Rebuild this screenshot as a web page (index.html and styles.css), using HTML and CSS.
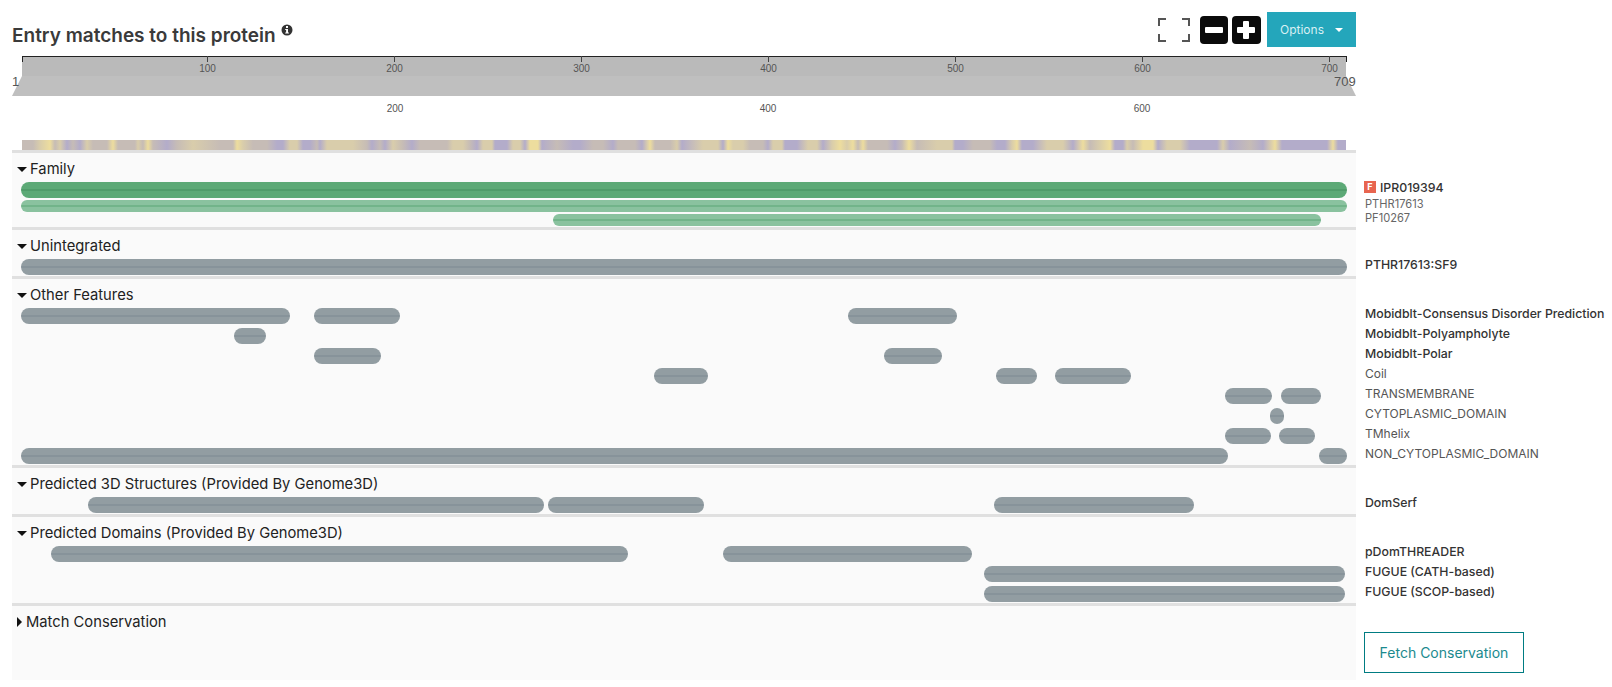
FILE: index.html
```html
<!DOCTYPE html>
<html lang="en">
<head>
    <meta charset="UTF-8">
    <title>Entry matches to this protein</title>
    <link rel="stylesheet" href="styles.css">
</head>
<body>
    <div class="top">
        <h2 class="title">Entry matches to this protein
            <svg class="info" viewBox="0 0 12 12" width="12" height="12">
                <circle cx="6" cy="6" r="5.5" fill="#333"/>
                <rect x="5" y="2" width="2" height="2" fill="#fff"/>
                <path d="M4.2 5h2.8v3.6h.9v1H4.2v-1h.9V6h-.9z" fill="#fff"/>
            </svg>
        </h2>
        <div class="controls">
            <svg class="full" viewBox="0 0 32 24" width="32" height="24">
                <path d="M1 8V1h7M24 1h7v7M31 16v7h-7M8 23H1v-7" fill="none" stroke="#555" stroke-width="2"/>
            </svg>
            <button class="zoom-btn" aria-label="zoom out"><span class="hbar"></span></button>
            <button class="zoom-btn zoom-in" aria-label="zoom in"><span class="hbar"></span><span class="vbar"></span></button>
            <button class="options">Options<span class="opt-caret"></span></button>
        </div>
    </div>

    <svg class="ruler" viewBox="0 0 1344 84" width="1344" height="84">
        <rect class="ruler-band" x="10" y="1" width="1324" height="19"/>
        <polygon class="ruler-zoom" points="10,20 1334,20 1344,40 0,40"/>
        <path class="ruler-line" d="M10 .5H1334.5M10.5 0V6M1334.5 0V6"/>
        <path class="ruler-tick" d="M195.5 0V6M382.5 0V6M569.5 0V6M756.5 0V6M943.5 0V6M1130.5 0V6M1317.5 0V6"/>
        <text class="tick" x="195.5" y="15.5">100</text>
        <text class="tick" x="382.5" y="15.5">200</text>
        <text class="tick" x="569.5" y="15.5">300</text>
        <text class="tick" x="756.5" y="15.5">400</text>
        <text class="tick" x="943.5" y="15.5">500</text>
        <text class="tick" x="1130.5" y="15.5">600</text>
        <text class="tick" x="1317.5" y="15.5">700</text>
        <text class="end" x="0" y="30">1</text>
        <text class="end" x="1322" y="30">709</text>
        <text class="tick" x="383" y="55.5">200</text>
        <text class="tick" x="756" y="55.5">400</text>
        <text class="tick" x="1130" y="55.5">600</text>
    </svg>

    <div class="strip"></div>

    <section class="group">
        <div class="panel">
            <div class="head"><span class="caret"></span>Family</div>
            <div class="rows rows-tight">
                <div class="row"><div class="bar bar-green" style="left:9px;width:1326px"></div></div>
                <div class="row row-thin"><div class="bar bar-light" style="left:9px;width:1326px"></div></div>
                <div class="row row-thin"><div class="bar bar-light" style="left:541px;width:768px"></div></div>
            </div>
        </div>
        <div class="labels">
            <div class="label strong"><span class="badge">F</span>IPR019394</div>
            <div class="label small">PTHR17613</div>
            <div class="label small">PF10267</div>
        </div>
    </section>

    <section class="group">
        <div class="panel">
            <div class="head"><span class="caret"></span>Unintegrated</div>
            <div class="rows">
                <div class="row"><div class="bar" style="left:9px;width:1326px"></div></div>
            </div>
        </div>
        <div class="labels">
            <div class="label strong">PTHR17613:SF9</div>
        </div>
    </section>

    <section class="group">
        <div class="panel">
            <div class="head"><span class="caret"></span>Other Features</div>
            <div class="rows">
                <div class="row">
                    <div class="bar" style="left:9px;width:269px"></div>
                    <div class="bar" style="left:302px;width:86px"></div>
                    <div class="bar" style="left:836px;width:109px"></div>
                </div>
                <div class="row"><div class="bar" style="left:222px;width:32px"></div></div>
                <div class="row">
                    <div class="bar" style="left:302px;width:67px"></div>
                    <div class="bar" style="left:872px;width:58px"></div>
                </div>
                <div class="row">
                    <div class="bar" style="left:642px;width:54px"></div>
                    <div class="bar" style="left:984px;width:41px"></div>
                    <div class="bar" style="left:1043px;width:76px"></div>
                </div>
                <div class="row">
                    <div class="bar" style="left:1213px;width:47px"></div>
                    <div class="bar" style="left:1269px;width:40px"></div>
                </div>
                <div class="row"><div class="bar" style="left:1258px;width:14px"></div></div>
                <div class="row">
                    <div class="bar" style="left:1213px;width:46px"></div>
                    <div class="bar" style="left:1267px;width:36px"></div>
                </div>
                <div class="row">
                    <div class="bar" style="left:9px;width:1207px"></div>
                    <div class="bar" style="left:1307px;width:28px"></div>
                </div>
            </div>
        </div>
        <div class="labels">
            <div class="label strong">Mobidblt-Consensus Disorder Prediction</div>
            <div class="label strong">Mobidblt-Polyampholyte</div>
            <div class="label strong">Mobidblt-Polar</div>
            <div class="label">Coil</div>
            <div class="label">TRANSMEMBRANE</div>
            <div class="label">CYTOPLASMIC_DOMAIN</div>
            <div class="label">TMhelix</div>
            <div class="label">NON_CYTOPLASMIC_DOMAIN</div>
        </div>
    </section>

    <section class="group">
        <div class="panel">
            <div class="head"><span class="caret"></span>Predicted 3D Structures (Provided By Genome3D)</div>
            <div class="rows">
                <div class="row">
                    <div class="bar" style="left:76px;width:456px"></div>
                    <div class="bar" style="left:536px;width:156px"></div>
                    <div class="bar" style="left:982px;width:200px"></div>
                </div>
            </div>
        </div>
        <div class="labels">
            <div class="label strong">DomSerf</div>
        </div>
    </section>

    <section class="group">
        <div class="panel">
            <div class="head"><span class="caret"></span>Predicted Domains (Provided By Genome3D)</div>
            <div class="rows">
                <div class="row">
                    <div class="bar" style="left:39px;width:577px"></div>
                    <div class="bar" style="left:711px;width:249px"></div>
                </div>
                <div class="row"><div class="bar" style="left:972px;width:361px"></div></div>
                <div class="row"><div class="bar" style="left:972px;width:361px"></div></div>
            </div>
        </div>
        <div class="labels">
            <div class="label strong">pDomTHREADER</div>
            <div class="label strong">FUGUE (CATH-based)</div>
            <div class="label strong">FUGUE (SCOP-based)</div>
        </div>
    </section>

    <section class="group group-last">
        <div class="panel">
            <div class="head"><span class="caret caret-right"></span>Match Conservation</div>
        </div>
        <div class="labels">
            <button class="fetch">Fetch Conservation</button>
        </div>
    </section>
</body>
</html>
```

FILE: styles.css
```css
* {
    box-sizing: border-box;
}
body {
    margin: 0;
    padding: 12px 0 0 12px;
    background: #fff;
    font-family: Inter, "Liberation Sans", sans-serif;
    color: #333;
}

/* title + zoom buttons */
.top {
    width: 1344px;
    height: 44px;
    display: flex;
    justify-content: space-between;
    align-items: flex-start;
}
.title {
    margin: 12px 0 0;
    font-size: 19px;
    line-height: 24px;
    font-weight: 600;
    color: #3a3a3a;
}
.info {
    vertical-align: 6px;
}
.controls {
    display: flex;
    align-items: flex-start;
}
.full {
    margin: 6px 10px 0 0;
}
.zoom-btn {
    position: relative;
    width: 28px;
    height: 28px;
    margin: 4px 4px 0 0;
    padding: 0;
    border: 0;
    border-radius: 4px;
    background: #0a0a0a;
}
.zoom-in {
    width: 29px;
}
.hbar, .vbar {
    position: absolute;
    background: #fff;
    border-radius: 1px;
}
.hbar {
    left: 5px;
    top: 11px;
    width: 18px;
    height: 6px;
}
.vbar {
    left: 11px;
    top: 5px;
    width: 6px;
    height: 18px;
}
.options {
    width: 89px;
    height: 35px;
    margin-left: 2px;
    padding: 0 0 0 13px;
    border: 0;
    background: #24a6bb;
    color: #d8f0f4;
    font-family: Inter, "Liberation Sans", sans-serif;
    font-size: 12px;
    text-align: left;
}
.opt-caret {
    display: inline-block;
    margin-left: 11px;
    vertical-align: 2px;
    border: 4.5px solid transparent;
    border-top: 4.5px solid #fff;
    border-bottom: 0;
}

/* ruler */
.ruler {
    display: block;
}
.ruler-band {
    fill: #bababa;
}
.ruler-zoom {
    fill: #bfbfbf;
}
.ruler-line {
    fill: none;
    stroke: #222;
}
.ruler-tick {
    fill: none;
    stroke: #444;
}
.tick {
    font-family: "Liberation Sans", sans-serif;
    font-size: 10px;
    fill: #555;
    text-anchor: middle;
}
.end {
    font-family: "Liberation Sans", sans-serif;
    font-size: 13px;
    fill: #555;
}

/* conservation strip */
.strip {
    --Y: #eddd9e;
    --y: #d9cdab;
    --g: #c6bcb6;
    --p: #b3acca;
    width: 1324px;
    height: 10px;
    margin-left: 10px;
    background: linear-gradient(to right,
        var(--g) 0, var(--g) 11px, var(--y) 18px, var(--Y) 28px, var(--g) 33px, var(--y) 38px, var(--p) 45px,
        var(--g) 51px, var(--p) 58px, var(--y) 65px, var(--g) 71px, var(--g) 85px, var(--Y) 91px, var(--g) 96px,
        var(--g) 113px, var(--y) 116px, var(--g) 121px, var(--Y) 126px, var(--g) 131px, var(--p) 145px, var(--g) 155px,
        var(--y) 171px, var(--g) 198px, var(--g) 211px, var(--Y) 215px, var(--y) 221px, var(--g) 231px, var(--g) 245px,
        var(--p) 255px, var(--p) 261px, var(--y) 268px, var(--y) 275px, var(--p) 281px, var(--p) 288px, var(--g) 295px,
        var(--p) 298px, var(--y) 305px, var(--y) 331px, var(--g) 345px, var(--p) 350px, var(--g) 358px, var(--p) 363px,
        var(--y) 371px, var(--g) 381px, var(--p) 390px, var(--g) 398px, var(--g) 425px, var(--y) 431px, var(--y) 441px,
        var(--g) 448px, var(--p) 455px, var(--y) 461px, var(--y) 470px, var(--p) 473px, var(--p) 485px, var(--y) 491px,
        var(--y) 498px, var(--p) 503px, var(--Y) 508px, var(--Y) 516px, var(--p) 520px, var(--g) 535px, var(--p) 551px,
        var(--p) 558px, var(--g) 571px, var(--g) 581px, var(--p) 591px, var(--g) 596px, var(--g) 613px, var(--p) 620px,
        var(--Y) 628px, var(--g) 633px, var(--g) 648px, var(--y) 655px, var(--p) 660px, var(--y) 681px, var(--y) 696px,
        var(--p) 701px, var(--Y) 706px, var(--y) 711px, var(--y) 721px, var(--g) 728px, var(--g) 741px, var(--p) 746px,
        var(--y) 751px, var(--y) 760px, var(--p) 763px, var(--p) 775px, var(--y) 786px, var(--y) 795px, var(--p) 801px,
        var(--y) 810px, var(--Y) 818px, var(--y) 825px, var(--Y) 831px, var(--g) 836px, var(--Y) 841px, var(--g) 846px,
        var(--g) 865px, var(--p) 873px, var(--g) 880px, var(--Y) 887px, var(--g) 895px, var(--y) 915px, var(--y) 930px,
        var(--p) 933px, var(--p) 941px, var(--g) 951px, var(--g) 968px, var(--p) 975px, var(--p) 983px, var(--y) 990px,
        var(--Y) 995px, var(--p) 1000px, var(--p) 1011px, var(--y) 1025px, var(--y) 1041px, var(--p) 1051px, var(--Y) 1061px,
        var(--g) 1068px, var(--y) 1078px, var(--Y) 1088px, var(--p) 1093px, var(--p) 1101px, var(--y) 1105px, var(--g) 1111px,
        var(--Y) 1121px, var(--Y) 1131px, var(--p) 1136px, var(--y) 1145px, var(--y) 1158px, var(--p) 1168px, var(--p) 1195px,
        var(--y) 1201px, var(--p) 1208px, var(--g) 1228px, var(--p) 1241px, var(--Y) 1253px, var(--p) 1260px, var(--p) 1305px,
        var(--Y) 1311px, var(--p) 1316px, var(--p) 1324px);
}

/* track sections */
.group {
    display: flex;
    width: 1600px;
}
.panel {
    width: 1344px;
    flex: none;
    border-top: 3px solid #e0e0e0;
    padding-bottom: 1px;
    background: #fafafa;
}
.group-last .panel {
    height: 77px;
}
.head {
    height: 29px;
    padding: 6px 0 0 5px;
    font-size: 14.75px;
    line-height: 21px;
    color: #222;
}
.caret {
    display: inline-block;
    margin-right: 3px;
    vertical-align: 2px;
    border: 5px solid transparent;
    border-top: 5px solid #111;
    border-bottom: 0;
}
.caret-right {
    margin-right: 4px;
    vertical-align: 0;
    border: 5px solid transparent;
    border-left: 5px solid #111;
    border-right: 0;
}
.rows {
    display: flex;
    flex-direction: column;
    gap: 4px;
}
.rows-tight {
    gap: 2px;
}
.row {
    position: relative;
    height: 16px;
}
.row-thin {
    height: 12px;
}
.bar {
    position: absolute;
    top: 0;
    height: 100%;
    border-radius: 8px;
    background: linear-gradient(to bottom, #929da2 0, #929da2 7px, #87939a 7px, #87939a 9px, #929da2 9px);
}
.bar-green {
    background: linear-gradient(to bottom, #5ca976 0, #5ca976 7px, #509c6a 7px, #509c6a 9px, #5ca976 9px);
}
.bar-light {
    border-radius: 6px;
    background: linear-gradient(to bottom, #8ac29f 0, #8ac29f 5px, #72b48a 5px, #72b48a 7px, #8ac29f 7px);
}

/* names on the right */
.labels {
    flex: none;
    padding: 28px 0 0 9px;
}
.label {
    height: 20px;
    font-size: 12px;
    line-height: 20px;
    color: #555;
    white-space: nowrap;
}
.strong {
    font-size: 12.3px;
    font-weight: 500;
    color: #333;
}
.small {
    height: 13.5px;
    font-size: 11.1px;
    line-height: 13px;
    color: #666;
}
.badge {
    display: inline-block;
    width: 12px;
    height: 12px;
    margin: 0 4px 0 -1px;
    background: #e8654f;
    color: #fff;
    font-size: 9px;
    font-weight: 700;
    line-height: 12px;
    text-align: center;
    vertical-align: 2px;
}
.fetch {
    width: 160px;
    height: 41px;
    margin: 1px 0 0 -1px;
    padding: 0;
    border: 1px solid #007c82;
    background: #fff;
    color: #1b8a8e;
    font-family: Inter, "Liberation Sans", sans-serif;
    font-size: 14px;
}
```
